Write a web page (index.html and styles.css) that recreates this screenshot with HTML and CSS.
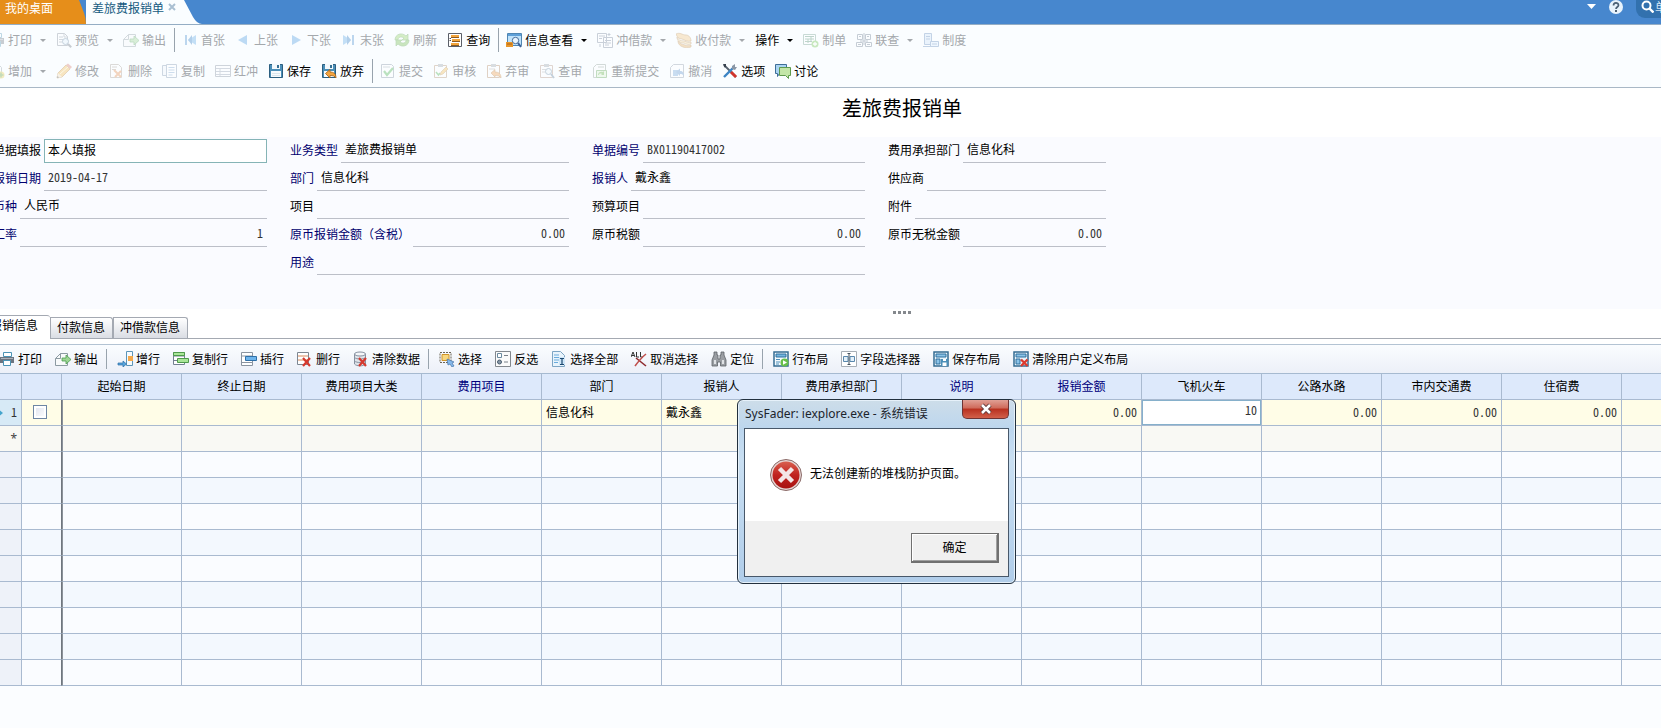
FILE: index.html
```html
<!DOCTYPE html>
<html lang="zh-CN">
<head>
<meta charset="utf-8">
<title>差旅费报销单</title>
<link rel="stylesheet" href="styles.css">
</head>
<body>
<svg class="sprite" aria-hidden="true">
  <symbol id="print" viewBox="0 0 16 16"><path d="M4.500 1.500h8v4h-8z" fill="#fff" stroke="#4b93b5"/><path d="M1 6h14v6H1z" fill="#6d7580"/><path d="M2 7h12v1H2z" fill="#aab2bb"/><path d="M4.500 9.500h7v5h-7z" fill="#fff" stroke="#4b93b5"/></symbol>
  <symbol id="preview" viewBox="0 0 16 16"><path d="M1.500 1.500h7l3 3v9h-10z" fill="#fff" stroke="#7d8794"/><path d="M8 1.500v3.500h3.500M3 5h4M3 7.500h4M3 10h3" fill="none" stroke="#8d97a4"/><circle cx="9.500" cy="9.500" r="3" fill="#e3f0fb" stroke="#5f7f9e"/><path d="M12 12l3.200 3.200" stroke="#6a7480" stroke-width="2"/></symbol>
  <symbol id="export" viewBox="0 0 16 16"><path d="M5.500 2.500h7v12h-12v-7z" fill="#f8fafb" stroke="#8c9aa2"/><path d="M5.500 2.500v5h-5" fill="none" stroke="#8c9aa2"/><path d="M7 7h4V4l5 4.500-5 4.500v-3H7z" fill="#9bd592" stroke="#4c9c50" stroke-width=".8"/></symbol>
  <symbol id="first" viewBox="0 0 16 16"><path d="M3 3h2v10H3z" fill="#4b8fd0"/><path d="M14 3v10L6 8z" fill="#5fa8e6"/><path d="M10 3v10L6 8z" fill="#2f7cc4"/></symbol>
  <symbol id="prev" viewBox="0 0 16 16"><path d="M12 3v10L3 8z" fill="#4b9be0"/></symbol>
  <symbol id="next" viewBox="0 0 16 16"><path d="M4 3v10l9-5z" fill="#4b9be0"/></symbol>
  <symbol id="last" viewBox="0 0 16 16"><path d="M11 3h2v10h-2z" fill="#4b8fd0"/><path d="M2 3v10l8-5z" fill="#5fa8e6"/><path d="M6 3v10l4-5z" fill="#2f7cc4"/></symbol>
  <symbol id="refresh" viewBox="0 0 16 16"><path d="M1 8c0-6 7-8 11-4l2-2v6H8l2-2C7 4 4 5 4 8z" fill="#8fd05c" stroke="#4c9838" stroke-width=".7"/><path d="M15 8c0 6-7 8-11 4l-2 2V8h6l-2 2c3 2 6 1 6-2z" fill="#6fbb48" stroke="#4c9838" stroke-width=".7"/></symbol>
  <symbol id="query" viewBox="0 0 16 16"><path d="M1.500 1.500h13v13h-13z" fill="#fff" stroke="#5a5f68"/><path d="M4 3h8v2H4zM5 7h8v2H5zM4 11h8v2H4z" fill="#f3a53c"/><path d="M4 5.500h8M5 9.500h8M4 13.500h8" stroke="#8a5a22"/><path d="M2.500 6.500h1.500M2.500 8.500h1.500" stroke="#555"/></symbol>
  <symbol id="info" viewBox="0 0 16 16"><path d="M1.500 1.500h14v12h-14z" fill="#bfe2fa" stroke="#4f86b3"/><path d="M2 2h13v2H2z" fill="#5fa0d8"/><path d="M0 10h7v5H0z" fill="#e8962a"/><path d="M1 12h5" stroke="#a86014"/><circle cx="9.500" cy="8.500" r="3.200" fill="#eaf6ff" stroke="#4a6e9a"/><path d="M12 11l3 4" stroke="#3b5f96" stroke-width="2"/></symbol>
  <symbol id="offset" viewBox="0 0 16 16"><path d="M.500 1.500h9v9h-9zM6.500 5.500h9v10h-9z" fill="#fff" stroke="#6f7f94"/><path d="M2 4h6M2 6.500h3M8 8.500h6M8 11h6M8 13h4M12 1v3M10.500 2.500h3M3 12v3" stroke="#6f7f94"/></symbol>
  <symbol id="pay" viewBox="0 0 16 16"><path d="M0 2c4-2 6 1 10 1 3 0 5 3 5 6-4 1-6-1-9-2-3 0-5-2-6-5z" fill="#f2c47a" stroke="#b07a35" stroke-width=".7"/><path d="M1 5c1 3 4 4 7 4 3 1 5 2 7 1v2c-3 1-5 0-7-1-4 0-7-2-7-6z" fill="#f8dba2" stroke="#b07a35" stroke-width=".7"/><path d="M2 9c2 3 4 3 7 4 2 1 4 1 6 0v2c-3 1-6 1-8 0-3-1-5-3-5-6z" fill="#e8ad5a" stroke="#b07a35" stroke-width=".7"/></symbol>
  <symbol id="bill" viewBox="0 0 16 16"><path d="M.500 2.500h12v10H.500z" fill="#fff" stroke="#6e9a8a"/><path d="M2 4.500h9M2 7h9M2 9.500h7M5 7v4M8 5v4" stroke="#4f8a6c"/><circle cx="12" cy="12" r="3.500" fill="#6cc24a"/><path d="M12 10v4M10 12h4" stroke="#fff" stroke-width="1.300"/></symbol>
  <symbol id="link" viewBox="0 0 16 16"><path d="M1.500 2.500h5v5h-5zM9.500 2.500h5v5h-5zM.500 10.500h6v4h-6zM9.500 10.500h6v4h-6z" fill="#fff" stroke="#66758a"/><path d="M3 4.500h2M11 4.500h2M2 12.500h3M11 12.500h3M8 1v12M4 9h8" stroke="#66758a"/></symbol>
  <symbol id="rule" viewBox="0 0 16 16"><path d="M1.500 1.500h7v11h-7z" fill="#cfe2f8" stroke="#5f86b8"/><path d="M3 4.500h4M3 7h4M0 14.500h9" stroke="#5f86b8"/><path d="M7.500 9.500h8v5h-8z" fill="#dcecff" stroke="#5f86b8"/><path d="M9 12h5" stroke="#5f86b8"/></symbol>
  <symbol id="add" viewBox="0 0 16 16"><path d="M2.500 1.500h7l3 3v9h-10z" fill="#fff" stroke="#8c9aa2"/><circle cx="12" cy="12" r="3.500" fill="#e8c94a"/><path d="M12 9.500v5M9.500 12h5" stroke="#5c9f3a" stroke-width="1.500"/></symbol>
  <symbol id="edit" viewBox="0 0 16 16"><path d="M1 15l1-5 8-8 4 4-8 8z" fill="#f4b94e" stroke="#b57a25" stroke-width=".8"/><path d="M10 2l2-1.500 4 3.500-2 2z" fill="#d97b6c"/><path d="M1 15l1-5 4 4z" fill="#f3dfc0"/><path d="M1 15l.500-2 1.500 1.500z" fill="#333"/><path d="M4 11l8-7" stroke="#fff0b8"/></symbol>
  <symbol id="delete" viewBox="0 0 16 16"><path d="M1.500 1.500h8l3 3v10h-11z" fill="#fff" stroke="#a39a92"/><path d="M3 4h5M3 6.500h4" stroke="#a39a92"/><path d="M5 7l7 7M12 8l-6 6" stroke="#e58a4a" stroke-width="2"/></symbol>
  <symbol id="copy" viewBox="0 0 16 16"><path d="M.500 2.500h9v10h-9z" fill="#eef4fa" stroke="#7b93ad"/><path d="M4.500 1.500h10v13h-10z" fill="#fff" stroke="#7b93ad"/><path d="M6.500 4.500h6M6.500 7h6M6.500 9.500h6M6.500 12h4" stroke="#7ba4cc"/></symbol>
  <symbol id="red" viewBox="0 0 16 16"><path d="M.500 2.500h15v11H.500z" fill="#fff" stroke="#7f8b9a"/><path d="M1 5.500h14M1 8.500h14M1 11.500h14M5 5v8" stroke="#8f9cad"/></symbol>
  <symbol id="save" viewBox="0 0 16 16"><path d="M1.500 1.500h13v13h-13z" fill="#4b8fb8" stroke="#2c5f80"/><path d="M4 1h8v5H4z" fill="#f4f9fc"/><path d="M9 2h2v3H9z" fill="#376f92"/><path d="M3 8h10v6H3z" fill="#f7fbfd"/><path d="M4 10.500h8M4 12.500h8" stroke="#dbe7ee"/></symbol>
  <symbol id="discard" viewBox="0 0 16 16"><path d="M1.500 1.500h13v13h-13z" fill="#4b8fb8" stroke="#2c5f80"/><path d="M4 1h8v5H4z" fill="#f4f9fc"/><path d="M9 2h2v3H9z" fill="#376f92"/><path d="M3 8h10v6H3z" fill="#f7fbfd"/><path d="M4.500 10.500L9 6.500V9c4 0 6 2 6 6-1.500-2-3-2.500-6-2.500v2.500z" fill="#f4a540" stroke="#a35f14" stroke-width=".8"/></symbol>
  <symbol id="submit" viewBox="0 0 16 16"><path d="M1.500 1.500h10l2 2v11h-12z" fill="#fff" stroke="#7d8da0"/><path d="M3 4h7" stroke="#9aa7b5"/><path d="M4 8l3 4 6-7" fill="none" stroke="#45b04a" stroke-width="2.200"/></symbol>
  <symbol id="audit" viewBox="0 0 16 16"><path d="M1.500 2.500h12v12h-12z" fill="#fff" stroke="#b08e6a"/><path d="M5 1h5v3H5z" fill="#9aa2ac"/><path d="M3 9l2.500 3L7 10" fill="none" stroke="#45b04a" stroke-width="1.500"/><path d="M7 12l1-3 5-5 2 2-5 5z" fill="#f4b94e" stroke="#a87a30" stroke-width=".6"/></symbol>
  <symbol id="unaudit" viewBox="0 0 16 16"><path d="M1.500 2.500h12v12h-12z" fill="#fff" stroke="#b0805a"/><path d="M5 1h5v3H5z" fill="#9aa2ac"/><path d="M3 6h6" stroke="#aaa"/><path d="M5 10l4-3.500V9c4 0 6 2 6 6-1.500-2-3-2.500-6-2.500V14z" fill="#f09a48" stroke="#a35f14" stroke-width=".6"/></symbol>
  <symbol id="queryaudit" viewBox="0 0 16 16"><path d="M1.500 2.500h12v12h-12z" fill="#fff" stroke="#b08e7a"/><path d="M5 1h5v3H5z" fill="#9aa2ac"/><path d="M3 6.500h4M3 9h3" stroke="#aaa"/><circle cx="9.500" cy="8.500" r="3" fill="#eef6fc" stroke="#5f7f9e"/><path d="M12 11l3 4" stroke="#5f7f9e" stroke-width="1.800"/></symbol>
  <symbol id="resubmit" viewBox="0 0 16 16"><path d="M1.500 4.500l3-3h9v13h-12z" fill="#fff" stroke="#8a9a92"/><path d="M4.500 7.500h10v7h-10z" fill="#d9efcf" stroke="#5aa04c"/><path d="M6 12c0-3 3-4 5-3l1-1v4H9l1-1c-2-1-3 0-3 1z" fill="#5fb040"/><path d="M6 4h6" stroke="#8a9a92"/></symbol>
  <symbol id="revoke" viewBox="0 0 16 16"><path d="M1.500 4.500l3-3h10v13h-13z" fill="#fff" stroke="#8a94a4"/><path d="M4 7h5v6H4z" fill="#6fa3d8"/><path d="M7 9l4-3.500V8c3 0 4 2 4 5-1-1.500-2-2-4-2v2z" fill="#5f93cc"/></symbol>
  <symbol id="options" viewBox="0 0 16 16"><path d="M2 2l12 12" stroke="#55606e" stroke-width="1.800"/><path d="M1 1h3v3L2.500 4.500z" fill="#38424e"/><path d="M9 9l5 5" stroke="#d0342c" stroke-width="3"/><path d="M2 14L11 5" stroke="#3d84c4" stroke-width="2.400"/><path d="M10 3l3-2v3l2 0-2 3-3-1z" fill="#8a97a6"/></symbol>
  <symbol id="discuss" viewBox="0 0 16 16"><path d="M.500 1.500h11v9h-7l-2 3v-3h-2z" fill="#a9d4f2" stroke="#3e6e98"/><path d="M4.500 4.500h11v8h-2v3l-3-3h-6z" fill="#c3e6a8" stroke="#5f9a4e"/></symbol>
  <symbol id="addrow" viewBox="0 0 16 16"><path d="M9.500.500h6v14h-6z" fill="#f7fbfd" stroke="#5c95b8"/><path d="M11 5h5v5h-5z" fill="#f5a94a"/><path d="M1 12h5v-2l3.500 3L6 16v-2H1z" fill="#57a4dc" stroke="#2c6da3" stroke-width=".7"/></symbol>
  <symbol id="copyrow" viewBox="0 0 16 16"><path d="M.500 1.500h11v12H.500z" fill="#fff" stroke="#738090"/><path d="M1 5h10M1 9.500h4" stroke="#738090"/><path d="M4.500 7.500h11v4h-11zM.500 1.500h11v3h-11z" fill="#a9e698" stroke="#4f9a4c"/></symbol>
  <symbol id="insrow" viewBox="0 0 16 16"><path d="M.500 1.500h11v13H.500z" fill="#fff" stroke="#8a94a0"/><path d="M1 5h10M1 11.500h10" stroke="#8a94a0"/><path d="M4.500 5.500h11v4h-11z" fill="#6db4ec" stroke="#2f70a8"/></symbol>
  <symbol id="delrow" viewBox="0 0 16 16"><path d="M.500 1.500h11v12H.500z" fill="#fff" stroke="#7d8792"/><path d="M1 5h10M1 9h10" stroke="#d98a5a"/><path d="M6 7l7 8M13 7l-7 8" stroke="#d6392e" stroke-width="2.200"/></symbol>
  <symbol id="cleardata" viewBox="0 0 16 16"><path d="M1.500 3v10c2 2.500 9 2.500 11 0V3z" fill="#dfe4ea" stroke="#8791a0"/><ellipse cx="7" cy="3" rx="5.500" ry="2" fill="#f3f6f9" stroke="#8791a0"/><path d="M1.500 6.500c2 2 9 2 11 0M1.500 10c2 2 9 2 11 0" fill="none" stroke="#8791a0"/><path d="M6 7l7 8M13 7l-7 8" stroke="#d6392e" stroke-width="2.200"/></symbol>
  <symbol id="select" viewBox="0 0 16 16"><path d="M1 1.500h11v10H1z" fill="none" stroke="#6b6455" stroke-dasharray="2 1"/><path d="M3 3.500h7v6H3z" fill="#f8d77e" stroke="#cf9428"/><path d="M8 8l7 3-2 1 2 3-2 1-2-3-2 1z" fill="#85b8ea" stroke="#4674a8" stroke-width=".7"/></symbol>
  <symbol id="invert" viewBox="0 0 16 16"><path d="M.500 .500h15v15H.500z" fill="#fbfbfb" stroke="#83888e"/><path d="M2.500 2.500h4v4h-4z" fill="#fff" stroke="#6b8a9f"/><circle cx="4.500" cy="11" r="2" fill="#8a99a8" stroke="#4a5d70"/><path d="M9 4.500h4M9 11h4" stroke="#7b828a"/></symbol>
  <symbol id="selectall" viewBox="0 0 16 16"><path d="M1.500 .500h8l4 4v11h-12z" fill="#e9f4fc" stroke="#7da5c4"/><path d="M3 4h5M3 6.500h7M3 9h5M3 11.500h4" stroke="#6aabdc"/><path d="M8 6h6v8H8z" fill="#cfe6f8"/><path d="M9 7.500h4M11 7.500v6M9 13.500h4" stroke="#1c4870" stroke-width="1.200"/></symbol>
  <symbol id="unselect" viewBox="0 0 16 16"><path d="M0 6l2-5 2 5M1 4.500h2M5.500 1v5h2.500M9.500 1v5H12" fill="none" stroke="#333"/><path d="M5 7l10 8" stroke="#8e2a2e" stroke-width="1.600"/><path d="M15 3C10 7 7 11 4 15" stroke="#c0504d" stroke-width="1.600" fill="none"/></symbol>
  <symbol id="locate" viewBox="0 0 16 16"><path d="M3 1h3v3h1v4h2V4h1V1h3v3l2 5v6H9.500v-4h-3v4H1V9l2-5z" fill="#9a9ea3" stroke="#5d6267" stroke-width=".8"/><path d="M3 9h2v4H3zM11 9h2v4h-2z" fill="#dfe2e5"/></symbol>
  <symbol id="rowlayout" viewBox="0 0 16 16"><path d="M1 1h14v14H1z" fill="#f4fafd" stroke="#356c92" stroke-width="1.500"/><path d="M3 3h10v3H3z" fill="#74b6e0" stroke="#2f6f9c"/><path d="M3 8.500h4M3 11h4M3 13h3" stroke="#4c8fba"/><circle cx="11.500" cy="11.500" r="4" fill="#67bf4a"/><path d="M10 9.200v4.600l4-2.300z" fill="#fff"/></symbol>
  <symbol id="fields" viewBox="0 0 16 16"><path d="M.500 .500h15v15H.500z" fill="#fff" stroke="#a7aeb6"/><path d="M2.500 5.500h4.500v5h-4.500zM9 5.500h4.500v5H9z" fill="#e3f0fa" stroke="#5b88ad"/><path d="M6.500 2.500h3M8 2.500v11M6.500 13.500h3" stroke="#44525f"/></symbol>
  <symbol id="savelayout" viewBox="0 0 16 16"><path d="M1 1h14v14H1z" fill="#e8f4fb" stroke="#356c92" stroke-width="1.500"/><path d="M3 3h10v3H3zM3 8h4v5H3z" fill="#8cc4e8" stroke="#2f6f9c"/><path d="M8 8h7v7H8z" fill="#4b8fb8"/><path d="M10 8h3v2h-3zM9.500 11.500h4V15h-4z" fill="#fff"/></symbol>
  <symbol id="clearlayout" viewBox="0 0 16 16"><path d="M1 1h14v14H1z" fill="#e8f4fb" stroke="#356c92" stroke-width="1.500"/><path d="M3 3h10v3H3zM3 8h4v5H3z" fill="#8cc4e8" stroke="#2f6f9c"/><path d="M8 8.500l6.500 6.500M14.500 8.500L8 15" stroke="#dc3a2e" stroke-width="2.400"/></symbol>
</svg>

<header class="topbar">
  <nav class="pages">
    <a class="page home" href="#">我的桌面</a>
    <svg class="edge" width="7" height="24" viewBox="0 0 7 24"><path d="M0 0l5 13q2 5 2 11H0z" fill="#e68e1a"/></svg>
    <a class="page current" href="#">差旅费报销单<svg width="8" height="8" viewBox="0 0 8 8"><path d="M1 1l6 6M7 1L1 7" stroke="#a9bfd2" stroke-width="2"/></svg></a>
    <svg class="edge" width="18" height="24" viewBox="0 0 18 24"><path d="M0 0l9 17q4 7 9 7H0z" fill="#fafdff"/></svg>
  </nav>
  <div class="tools">
    <button class="plain" aria-label="菜单"><svg width="9" height="6" viewBox="0 0 9 6"><path d="M0 0h9L4.500 5z" fill="#fff"/></svg></button>
    <button class="plain" aria-label="帮助"><svg width="16" height="16" viewBox="0 0 16 16"><circle cx="8" cy="8" r="7" fill="#e8f3fc"/><path d="M5.500 6.500c0-3.500 5-3.300 5-.300C10.500 8 8 8 8 10" fill="none" stroke="#4b6075" stroke-width="1.700"/><path d="M7 11h2v2H7z" fill="#4b6075"/></svg></button>
    <label class="search"><svg width="13" height="13" viewBox="0 0 13 13"><circle cx="5.500" cy="5.500" r="4" fill="none" stroke="#fff" stroke-width="2"/><path d="M8.500 8.500l4 4" stroke="#fff" stroke-width="2.400"/></svg><input type="text" value="单据" aria-label="单据"></label>
  </div>
</header>

<main class="app">
  <div class="toolbars">
    <div class="bar">
      <button disabled><svg><use href="#print"/></svg>打印<i></i></button>
      <button disabled><svg><use href="#preview"/></svg>预览<i></i></button>
      <button disabled><svg><use href="#export"/></svg>输出</button>
      <span class="sep"></span>
      <button disabled><svg><use href="#first"/></svg>首张</button>
      <button disabled><svg><use href="#prev"/></svg>上张</button>
      <button disabled><svg><use href="#next"/></svg>下张</button>
      <button disabled><svg><use href="#last"/></svg>末张</button>
      <button disabled><svg><use href="#refresh"/></svg>刷新</button>
      <button><svg><use href="#query"/></svg>查询</button>
      <span class="sep"></span>
      <button><svg><use href="#info"/></svg>信息查看<i></i></button>
      <button disabled><svg><use href="#offset"/></svg>冲借款<i></i></button>
      <button disabled><svg><use href="#pay"/></svg>收付款<i></i></button>
      <button>操作<i></i></button>
      <button disabled><svg><use href="#bill"/></svg>制单</button>
      <button disabled><svg><use href="#link"/></svg>联查<i></i></button>
      <button disabled><svg><use href="#rule"/></svg>制度</button>
    </div>
    <div class="bar">
      <button disabled><svg><use href="#add"/></svg>增加<i></i></button>
      <button disabled><svg><use href="#edit"/></svg>修改</button>
      <button disabled><svg><use href="#delete"/></svg>删除</button>
      <button disabled><svg><use href="#copy"/></svg>复制</button>
      <button disabled><svg><use href="#red"/></svg>红冲</button>
      <button><svg><use href="#save"/></svg>保存</button>
      <button><svg><use href="#discard"/></svg>放弃</button>
      <span class="sep"></span>
      <button disabled><svg><use href="#submit"/></svg>提交</button>
      <button disabled><svg><use href="#audit"/></svg>审核</button>
      <button disabled><svg><use href="#unaudit"/></svg>弃审</button>
      <button disabled><svg><use href="#queryaudit"/></svg>查审</button>
      <button disabled><svg><use href="#resubmit"/></svg>重新提交</button>
      <button disabled><svg><use href="#revoke"/></svg>撤消</button>
      <button><svg><use href="#options"/></svg>选项</button>
      <button><svg><use href="#discuss"/></svg>讨论</button>
    </div>
  </div>

  <h1>差旅费报销单</h1>

  <form class="fields">
    <div class="field active"><label for="f1">单据填报</label><input id="f1" value="本人填报"></div>
    <div class="field req"><label for="f2">业务类型</label><input id="f2" value="差旅费报销单"></div>
    <div class="field req"><label for="f3">单据编号</label><input id="f3" class="num" value="BX01190417002"></div>
    <div class="field"><label for="f4">费用承担部门</label><input id="f4" value="信息化科"></div>
    <div class="field req"><label for="f5">报销日期</label><input id="f5" class="num" value="2019-04-17"></div>
    <div class="field req"><label for="f6">部门</label><input id="f6" value="信息化科"></div>
    <div class="field req"><label for="f7">报销人</label><input id="f7" value="戴永鑫"></div>
    <div class="field"><label for="f8">供应商</label><input id="f8"></div>
    <div class="field req"><label for="f9">币种</label><input id="f9" value="人民币"></div>
    <div class="field"><label for="f10">项目</label><input id="f10"></div>
    <div class="field"><label for="f11">预算项目</label><input id="f11"></div>
    <div class="field"><label for="f12">附件</label><input id="f12"></div>
    <div class="field req"><label for="f13">汇率</label><input id="f13" class="num right" value="1"></div>
    <div class="field req"><label for="f14">原币报销金额（含税）</label><input id="f14" class="num right" value="0.00"></div>
    <div class="field"><label for="f15">原币税额</label><input id="f15" class="num right" value="0.00"></div>
    <div class="field"><label for="f16">原币无税金额</label><input id="f16" class="num right" value="0.00"></div>
    <div class="field req wide"><label for="f17">用途</label><input id="f17"></div>
  </form>

  <div class="splitter"><b></b><b></b><b></b><b></b></div>

  <div class="tabs">
    <button class="on">报销信息</button>
    <button>付款信息</button>
    <button>冲借款信息</button>
  </div>

  <div class="bar gridbar">
    <button><svg><use href="#print"/></svg>打印</button>
    <button><svg><use href="#export"/></svg>输出</button>
    <span class="sep"></span>
    <button><svg><use href="#addrow"/></svg>增行</button>
    <button><svg><use href="#copyrow"/></svg>复制行</button>
    <button><svg><use href="#insrow"/></svg>插行</button>
    <button><svg><use href="#delrow"/></svg>删行</button>
    <button><svg><use href="#cleardata"/></svg>清除数据</button>
    <span class="sep"></span>
    <button><svg><use href="#select"/></svg>选择</button>
    <button><svg><use href="#invert"/></svg>反选</button>
    <button><svg><use href="#selectall"/></svg>选择全部</button>
    <button><svg><use href="#unselect"/></svg>取消选择</button>
    <button><svg><use href="#locate"/></svg>定位</button>
    <span class="sep"></span>
    <button><svg><use href="#rowlayout"/></svg>行布局</button>
    <button><svg><use href="#fields"/></svg>字段选择器</button>
    <button><svg><use href="#savelayout"/></svg>保存布局</button>
    <button><svg><use href="#clearlayout"/></svg>清除用户定义布局</button>
  </div>

  <table class="grid">
    <colgroup><col class="c-no"><col class="c-check"><col span="13" class="c-data"><col></colgroup>
    <thead>
      <tr><th></th><th></th><th>起始日期</th><th>终止日期</th><th>费用项目大类</th><th class="req">费用项目</th><th>部门</th><th>报销人</th><th>费用承担部门</th><th class="req">说明</th><th class="req">报销金额</th><th>飞机火车</th><th>公路水路</th><th>市内交通费</th><th>住宿费</th><th></th></tr>
    </thead>
    <tbody>
      <tr class="current"><td class="num"><svg class="mark" width="5" height="8" viewBox="0 0 5 8"><path d="M0 0l5 4-5 4z" fill="#45a5cc"/></svg>1</td><td><input type="checkbox" aria-label="选择第1行"></td><td></td><td></td><td></td><td></td><td>信息化科</td><td>戴永鑫</td><td></td><td></td><td class="num right">0.00</td><td class="editing"><input class="num right" value="10" aria-label="飞机火车"></td><td class="num right">0.00</td><td class="num right">0.00</td><td class="num right">0.00</td><td></td></tr>
      <tr class="new"><td class="star">*</td><td></td><td></td><td></td><td></td><td></td><td></td><td></td><td></td><td></td><td></td><td></td><td></td><td></td><td></td><td></td></tr>
      <tr><td></td><td></td><td></td><td></td><td></td><td></td><td></td><td></td><td></td><td></td><td></td><td></td><td></td><td></td><td></td><td></td></tr>
      <tr><td></td><td></td><td></td><td></td><td></td><td></td><td></td><td></td><td></td><td></td><td></td><td></td><td></td><td></td><td></td><td></td></tr>
      <tr><td></td><td></td><td></td><td></td><td></td><td></td><td></td><td></td><td></td><td></td><td></td><td></td><td></td><td></td><td></td><td></td></tr>
      <tr><td></td><td></td><td></td><td></td><td></td><td></td><td></td><td></td><td></td><td></td><td></td><td></td><td></td><td></td><td></td><td></td></tr>
      <tr><td></td><td></td><td></td><td></td><td></td><td></td><td></td><td></td><td></td><td></td><td></td><td></td><td></td><td></td><td></td><td></td></tr>
      <tr><td></td><td></td><td></td><td></td><td></td><td></td><td></td><td></td><td></td><td></td><td></td><td></td><td></td><td></td><td></td><td></td></tr>
      <tr><td></td><td></td><td></td><td></td><td></td><td></td><td></td><td></td><td></td><td></td><td></td><td></td><td></td><td></td><td></td><td></td></tr>
      <tr><td></td><td></td><td></td><td></td><td></td><td></td><td></td><td></td><td></td><td></td><td></td><td></td><td></td><td></td><td></td><td></td></tr>
      <tr><td></td><td></td><td></td><td></td><td></td><td></td><td></td><td></td><td></td><td></td><td></td><td></td><td></td><td></td><td></td><td></td></tr>
    </tbody>
  </table>
</main>

<section class="dialog" role="alertdialog" aria-labelledby="dlg-title">
  <div class="dialog-head">
    <h2 id="dlg-title">SysFader: iexplore.exe - 系统错误</h2>
    <button class="close" aria-label="关闭"><svg width="14" height="12" viewBox="0 0 14 12"><path d="M3 2l8 8M11 2l-8 8" stroke="#5c3a3a" stroke-width="4.500"/><path d="M3 2l8 8M11 2l-8 8" stroke="#fff" stroke-width="2.500"/></svg></button>
  </div>
  <div class="dialog-client">
    <div class="dialog-message">
      <svg width="32" height="32" viewBox="0 0 32 32"><defs><linearGradient id="err" x1="0" y1="0" x2="0" y2="1"><stop offset="0" stop-color="#d9604f"/><stop offset=".5" stop-color="#c0221f"/><stop offset="1" stop-color="#a81210"/></linearGradient></defs><circle cx="16" cy="16" r="15.500" fill="#e6d6d4" stroke="#8a6a68"/><circle cx="16" cy="16" r="13.500" fill="url(#err)"/><path d="M9.500 9.500l13 13M22.500 9.500l-13 13" stroke="#f3e6e6" stroke-width="4.500"/></svg>
      <p>无法创建新的堆栈防护页面。</p>
    </div>
    <div class="dialog-foot"><button>确定</button></div>
  </div>
</section>
</body>
</html>
```
FILE: styles.css
```css
* { box-sizing: border-box; }

body {
  margin: 0;
  min-height: 100vh;
  overflow: hidden;
  position: relative;
  background: #fbfdff;
  color: #000;
  font: 12px/16px "Noto Sans CJK SC", sans-serif;
}

button, input {
  font: inherit;
  color: inherit;
  margin: 0;
  padding: 0;
  border: 0;
  background: none;
  border-radius: 0;
  outline: 0;
}

.sprite { display: none; }
svg { flex: none; }
.num { font-feature-settings: "hwid"; }
.right { text-align: right; }

/* Top bar */
.topbar {
  display: flex;
  justify-content: space-between;
  height: 25px;
  margin-right: -60px;
  background: #4787ce;
  border-bottom: 1px solid #94adc4;
}
.pages { display: flex; }
.page {
  display: flex;
  gap: 4px;
  height: 24px;
  text-decoration: none;
  white-space: nowrap;
}
.page.home { padding: 0 26px 0 5px; background: #e68e1a; color: #fff; }
.page.current { padding: 0 8px 0 6px; background: #fafdff; color: #155a80; }
.page svg { margin-top: 3px; }
.edge { display: block; }
.tools {
  display: flex;
  align-items: flex-start;
  gap: 12px;
}
.plain { display: flex; height: 14px; align-items: center; }
.search {
  display: flex;
  align-items: center;
  gap: 1px;
  width: 85px;
  height: 18px;
  padding: 0 0 5px 5px;
  border-radius: 0 0 0 9px;
  background: #3271ae;
  color: #d3e6f6;
}
.search input { width: 60px; height: 14px; }

/* The bill page runs wider than the window on both sides */
.app { margin: 0 -159px 0 -16px; }

.toolbars { background: #fafdff; border-bottom: 1px solid #a9b8c6; }
.bar { display: flex; align-items: center; height: 31px; }
.toolbars .bar { padding-bottom: 1px; }
.bar button {
  display: flex;
  align-items: center;
  gap: 3px;
  padding: 0 5px;
  white-space: nowrap;
}
.bar button svg { width: 16px; height: 16px; overflow: visible; }
.bar button:disabled { color: #a4a8ac; }
.bar button:disabled svg { opacity: .35; }
.bar i {
  margin-left: 5px;
  border: 3px solid transparent;
  border-top-color: currentColor;
  border-bottom: 0;
}
.sep { width: 1px; height: 24px; margin: 0 2px 0 3px; background: #98a3ad; }

h1 {
  margin: 0;
  height: 49px;
  padding-top: 5px;
  background: #fff;
  font-size: 20px;
  font-weight: 400;
  line-height: 30px;
  text-align: center;
}

/* Bill header */
.fields {
  display: grid;
  grid-template-columns: 274px 279px 273px 218px;
  gap: 3px 23px;
  padding: 1px 0 34px 9px;
  background: #fafbff;
}
.field { display: flex; align-items: center; gap: 3px; height: 25px; }
.field label { padding-bottom: 1px; white-space: nowrap; }
.field input {
  flex: 1;
  min-width: 0;
  height: 25px;
  padding: 0 4px 4px;
  border-bottom: 1px solid #bcbfc8;
}
.field.req label { color: #00006e; }
.field .num { color: #333; }
.field.active input { height: 24px; padding: 0 3px 3px; border: 1px solid #85b4b6; background: #fff; }
.field.wide { grid-column: 2 / 4; }

.splitter {
  display: flex;
  justify-content: center;
  gap: 2px;
  height: 6px;
  padding-top: 2px;
  background: #fff;
}
.splitter b { width: 3px; height: 3px; background: #84888d; }

/* Detail tabs */
.tabs {
  display: flex;
  align-items: flex-end;
  height: 24px;
  background: #fff;
  border-bottom: 1px solid #a4a9b2;
}
.tabs button {
  height: 21px;
  padding: 0 7px 2px 6px;
  border: 1px solid #a4a9b2;
  border-bottom: 0;
  border-radius: 0 3px 0 0;
  background: linear-gradient(#fff, #dadde4);
}
.tabs .on {
  height: 24px;
  margin-bottom: -1px;
  padding: 0 12px 6px 6px;
  border-width: 1px 0 0;
  background: #fff;
}

.gridbar {
  gap: 1px;
  height: 34px;
  padding-left: 9px;
  border-top: 5px solid #fff;
  box-shadow: inset 0 1px #b3c3d3;
  background: linear-gradient(#fbfdff, #ecf0f8);
}
.gridbar button { padding: 0 6px; }
.gridbar .sep { height: 20px; margin: 0 3px 0 1px; }

/* Detail grid */
.grid {
  width: 100%;
  table-layout: fixed;
  border-collapse: separate;
  border-spacing: 0;
  border-top: 1px solid #a6bad0;
}
.c-no { width: 38px; }
.c-check { width: 40px; }
.c-data { width: 120px; }
.grid th, .grid td {
  height: 26px;
  padding: 0 4px 2px;
  border-right: 1px solid #a9bad0;
  border-bottom: 1px solid #a9bad0;
  white-space: nowrap;
}
.grid th { background: #dde9fb; font-weight: 400; }
.grid th.req { color: #00007c; }
.grid td { background: #fafcff; }
.grid tr:nth-child(even) td { background: #f3f8fe; }
.grid .new td, .grid tr.new:nth-child(even) td { background: #f9f9f4; }
.grid .current td { background: #fffde7; }
.grid td.num { color: #333; }
.grid tbody td:first-child { background: #eef2f9; text-align: right; }
.grid .current td:first-child { background: #d7eaf6; }
.grid tbody td:nth-child(2) { border-right-color: #6f767e; padding-left: 11px; }
.grid tbody td:nth-child(3) { border-left: 1px solid #8b929a; }
.grid td.star { padding-bottom: 0; color: #444; font-family: "Noto Sans", sans-serif; }
.mark { margin-right: 8px; }
.grid td.editing { padding: 0; background: #fff; }
.editing input {
  display: block;
  width: 100%;
  height: 25px;
  padding: 0 3px 7px;
  border: 1px solid #86b0cb;
  color: #333;
}
.grid input[type="checkbox"] {
  display: block;
  appearance: none;
  width: 14px;
  height: 14px;
  border: 1px solid #6e86a4;
  background: linear-gradient(135deg, #dfe3ee, #fff);
  box-shadow: inset 0 0 0 2px #fff;
}

/* System error dialog */
.dialog {
  position: absolute;
  top: 399px;
  left: 737px;
  width: 279px;
  padding: 0 6px 6px;
  border: 1px solid #22303e;
  border-radius: 6px;
  background: linear-gradient(#cddde9, #bcd6ee 30px, #c9dff2 60px, #b0cdea);
  box-shadow: inset 0 0 0 1px #e6f1fa;
}
.dialog-head { display: flex; justify-content: space-between; height: 28px; }
.dialog h2 {
  margin: 0;
  padding: 5px 0 0 1px;
  font: 12px/18px "Noto Sans", "Noto Sans CJK SC", sans-serif;
  color: #1c242c;
  white-space: nowrap;
}
.close {
  display: flex;
  align-items: center;
  justify-content: center;
  width: 47px;
  height: 19px;
  border: 1px solid #6e3434;
  border-top: 0;
  border-radius: 0 0 5px 5px;
  background: linear-gradient(#e0a095, #cf6a5a 45%, #b8301f 50%, #d2604a);
}
.dialog-client { border: 1px solid #48586a; background: #f0f0f0; }
.dialog-message {
  display: flex;
  align-items: center;
  gap: 8px;
  height: 92px;
  padding: 0 0 0 25px;
  background: #fff;
}
.dialog-message p { margin: 0 0 4px; }
.dialog-foot { display: flex; justify-content: flex-end; padding: 12px 9px 13px; }
.dialog-foot button {
  width: 88px;
  height: 30px;
  padding-bottom: 2px;
  border: 1px solid #707070;
  border-width: 1px 2px 2px 1px;
  background: #f0f0f0;
  box-shadow: inset 1px 1px #fff, inset -1px -1px #a0a0a0;
}
```
